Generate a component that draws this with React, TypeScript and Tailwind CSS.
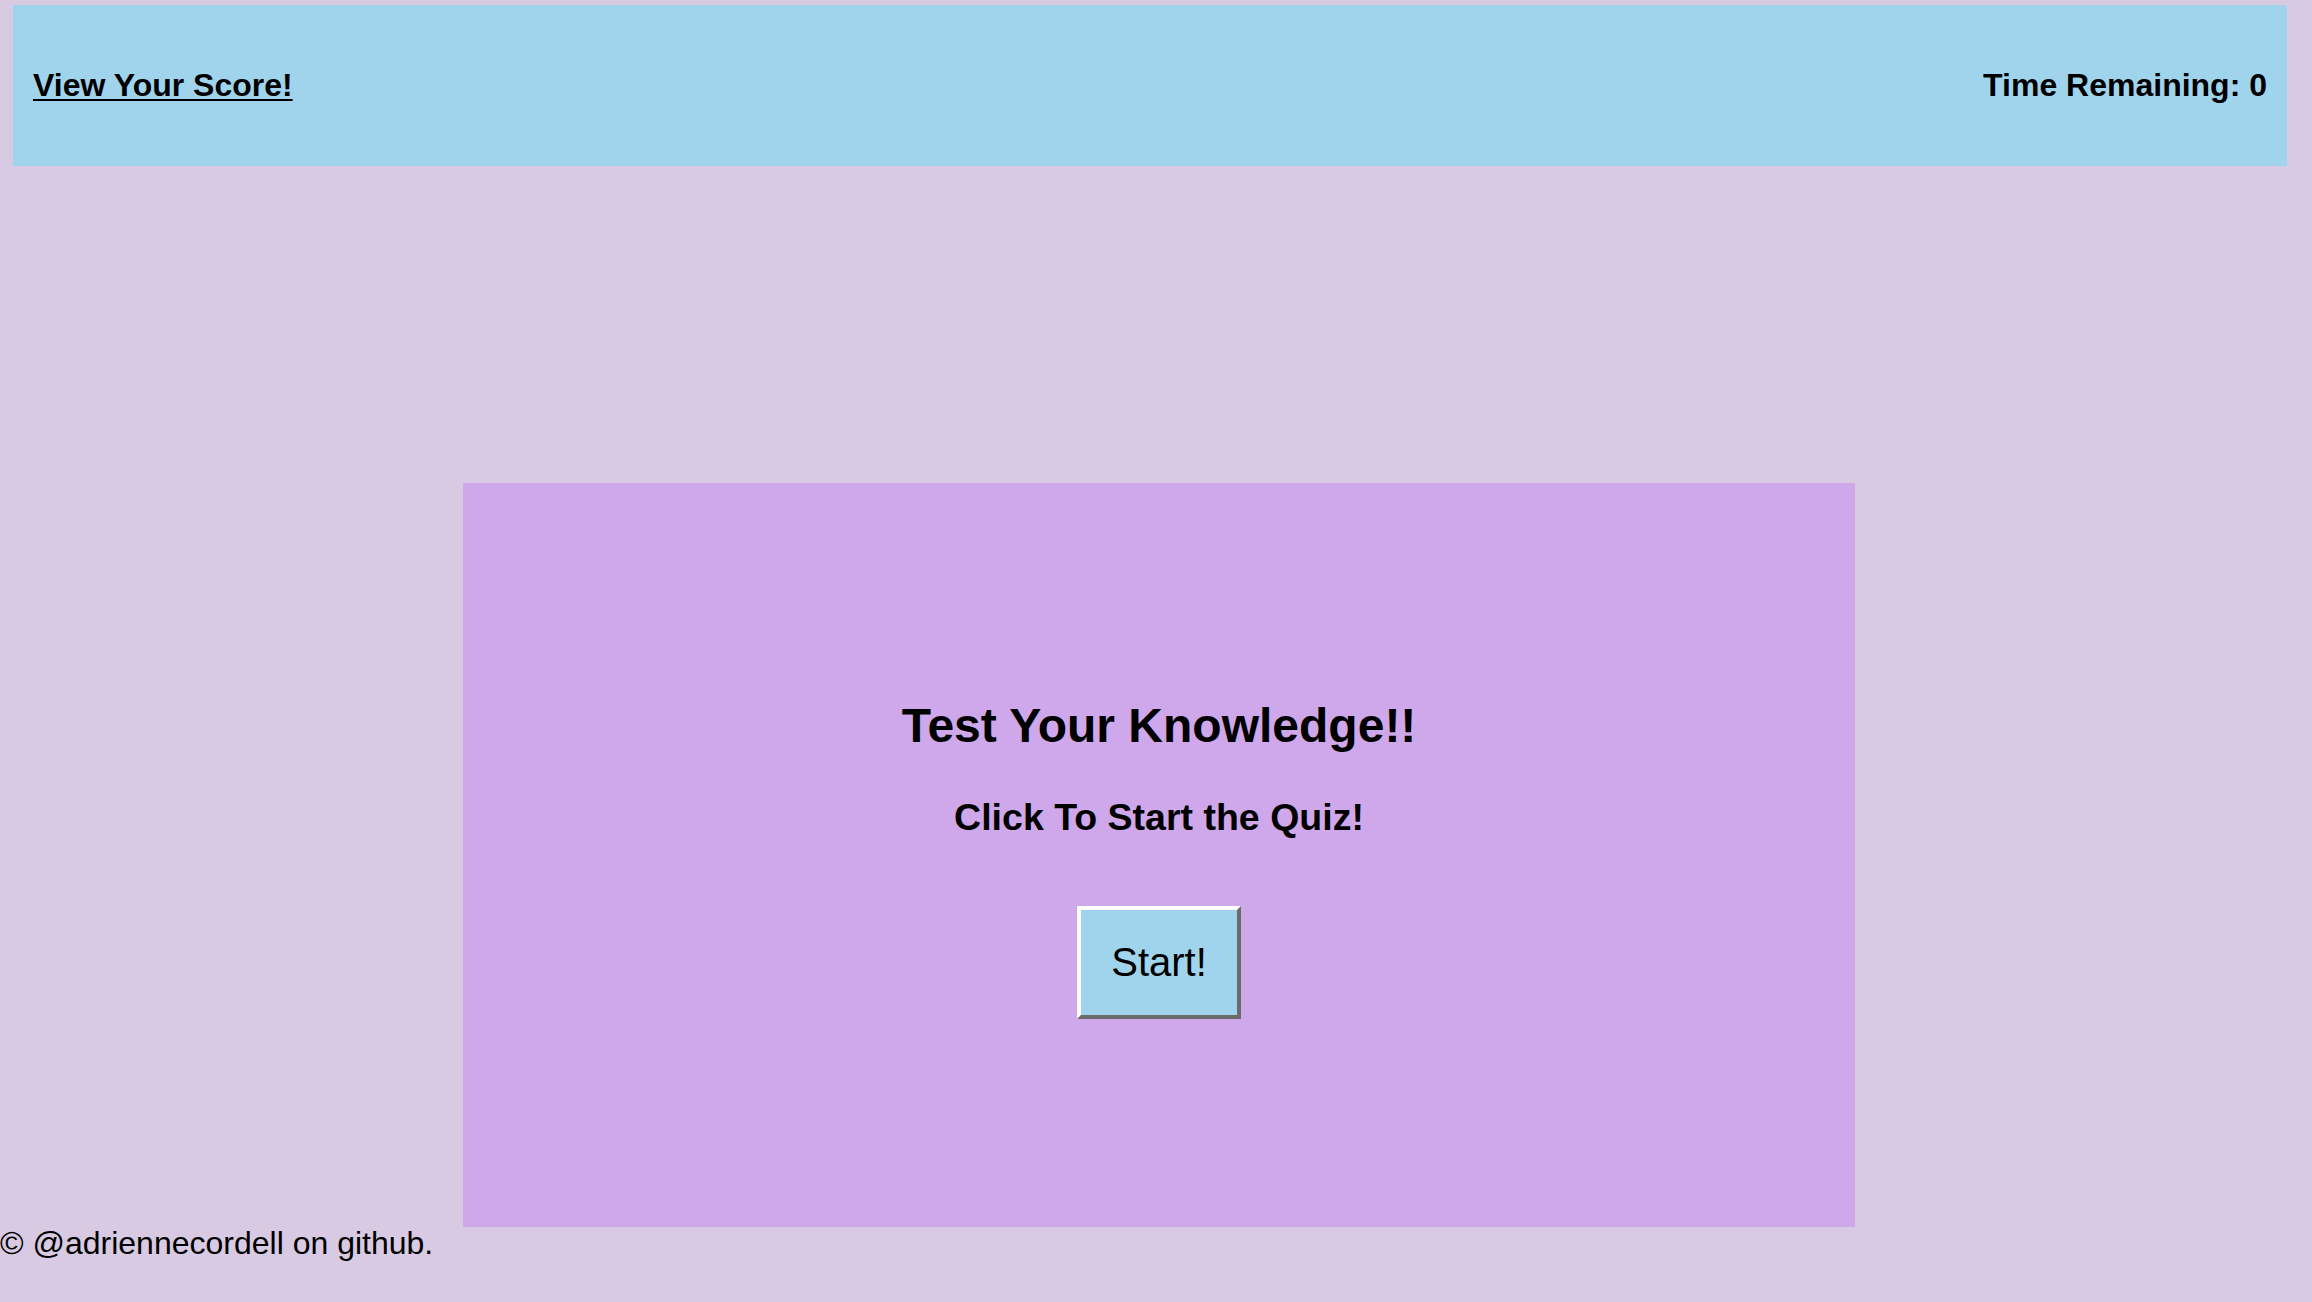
import React from "react";

// Quiz landing screen: score link + timer bar, start card, footer credit
export default function App() {
  return (
    <div
      className="min-h-[1302px] w-full bg-[#d8cae2] text-black"
      style={{ fontFamily: '"Liberation Sans", Arial, Helvetica, sans-serif' }}
    >
      <div className="pt-[5px] pl-[13px]">
        {/* ── Top bar ── */}
        <header className="flex h-[161px] w-[2274px] items-center justify-between bg-[#a0d4ec] px-[20px] pb-[2px]">
          <a
            href="#"
            className="text-[32px] font-bold leading-none underline decoration-2 underline-offset-[3px]"
          >
            View Your Score!
          </a>
          <span className="text-[32px] font-bold leading-none">Time Remaining: 0</span>
        </header>
      </div>

      {/* ── Start card ── */}
      <main className="ml-[463px] mt-[317px] flex h-[744px] w-[1392px] flex-col items-center bg-[#cea8ea] pt-[219px]">
        <h1 className="text-[48px] font-bold leading-none">Test Your Knowledge!!</h1>
        <h2 className="mt-[49px] text-[37.5px] font-bold leading-none">Click To Start the Quiz!</h2>
        <button
          className="mt-[69px] flex h-[113px] w-[164px] items-center justify-center border-4 border-t-white border-l-white border-r-[#6b6b6b] border-b-[#6b6b6b] bg-[#a0d4ec] text-[40px] leading-none"
        >
          Start!
        </button>
      </main>

      {/* ── Footer ── */}
      <footer className="text-[32px] leading-none">© @adriennecordell on github.</footer>
    </div>
  );
}
